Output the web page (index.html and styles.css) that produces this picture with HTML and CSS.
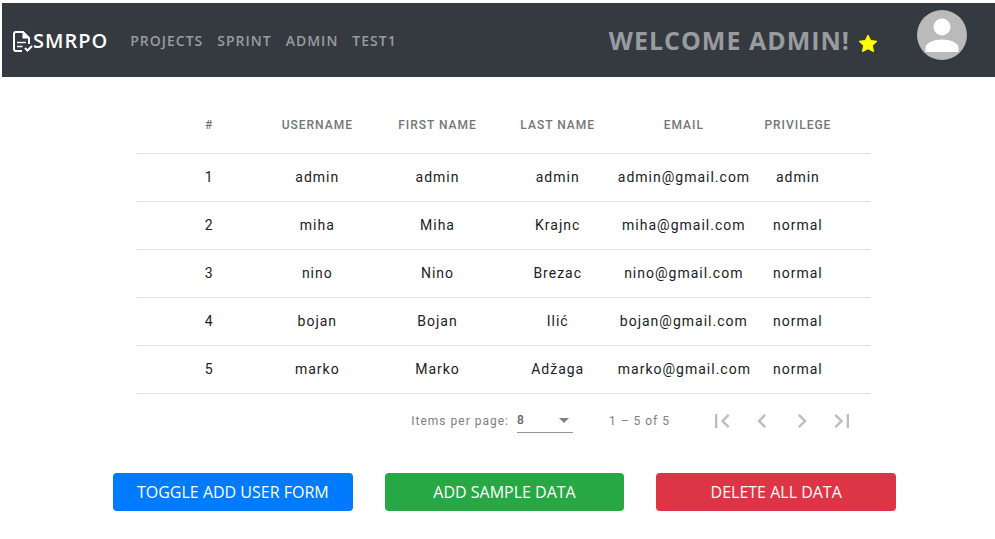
FILE: index.html
```html
<!DOCTYPE html>
<html lang="en">
<head>
<meta charset="utf-8">
<title>SMRPO</title>
<link rel="stylesheet" href="styles.css">
</head>
<body>
<header class="navbar">
  <a class="brand" href="#">
    <svg class="brand-icon" viewBox="0 0 20 22" fill="none" stroke="currentColor" stroke-width="2" aria-hidden="true">
      <path d="M9 20H3Q1 20 1 18V3Q1 1 3 1H10L16 7V13"/>
      <path d="M9.500 1V7.500H16.500Z" fill="currentColor" stroke="none"/>
      <path d="M4 11.500H13M4 15.500H9.500" stroke-width="1.500"/>
      <path d="M12 17L14.500 19.500L19 15"/>
    </svg><span>SMRPO</span>
  </a>
  <nav class="links">
    <a href="#">PROJECTS</a>
    <a href="#">SPRINT</a>
    <a href="#">ADMIN</a>
    <a href="#">TEST1</a>
  </nav>
  <div class="welcome">
    <span>WELCOME ADMIN!</span>
    <svg class="star" viewBox="0 0 20 19" aria-hidden="true"><path fill="#ff0" stroke="#ff0" stroke-linejoin="round" d="M10 1L12.700 6.500L19 7.300L14.400 11.500L15.600 17.700L10 14.700L4.400 17.700L5.600 11.500L1 7.300L7.300 6.500Z"/></svg>
  </div>
  <svg class="avatar" viewBox="0 0 50 50" role="img" aria-label="User profile">
    <circle cx="25" cy="25" r="25" fill="#bababa"/>
    <circle cx="25" cy="17" r="8.500" fill="#fff"/>
    <path fill="#fff" d="M8.500 42V38C8.500 32.500 17 29.500 25 29.500S41.500 32.500 41.500 38V42Z"/>
  </svg>
</header>
<main class="content">
  <section class="users">
    <table class="user-table">
      <thead>
        <tr><th class="index">#</th><th>USERNAME</th><th>FIRST NAME</th><th>LAST NAME</th><th class="email">EMAIL</th><th class="privilege">PRIVILEGE</th></tr>
      </thead>
      <tbody>
        <tr><td class="index">1</td><td>admin</td><td>admin</td><td>admin</td><td>admin@gmail.com</td><td class="privilege">admin</td></tr>
        <tr><td class="index">2</td><td>miha</td><td>Miha</td><td>Krajnc</td><td>miha@gmail.com</td><td class="privilege">normal</td></tr>
        <tr><td class="index">3</td><td>nino</td><td>Nino</td><td>Brezac</td><td>nino@gmail.com</td><td class="privilege">normal</td></tr>
        <tr><td class="index">4</td><td>bojan</td><td>Bojan</td><td>Ilić</td><td>bojan@gmail.com</td><td class="privilege">normal</td></tr>
        <tr><td class="index">5</td><td>marko</td><td>Marko</td><td>Adžaga</td><td>marko@gmail.com</td><td class="privilege">normal</td></tr>
      </tbody>
    </table>
    <div class="paginator">
      <label for="page-size">Items per page:</label>
      <div class="page-size">
        <select id="page-size"><option>8</option><option>16</option></select>
        <svg viewBox="0 0 10 5" aria-hidden="true"><path d="M0 0H10L5 5Z" fill="currentColor"/></svg>
      </div>
      <span class="range">1 – 5 of 5</span>
      <div class="pages">
        <button type="button" aria-label="First page"><svg viewBox="0 0 24 24"><path d="M18.410 16.590L13.820 12l4.590-4.590L17 6l-6 6 6 6zM6 6h2v12H6z"/></svg></button>
        <button type="button" aria-label="Previous page"><svg viewBox="0 0 24 24"><path d="M15.410 7.410L14 6l-6 6 6 6 1.410-1.410L10.830 12z"/></svg></button>
        <button type="button" aria-label="Next page"><svg viewBox="0 0 24 24"><path d="M10 6L8.590 7.410 13.170 12l-4.580 4.590L10 18l6-6z"/></svg></button>
        <button type="button" aria-label="Last page"><svg viewBox="0 0 24 24"><path d="M5.590 7.410L10.180 12l-4.590 4.590L7 18l6-6-6-6zM16 6h2v12h-2z"/></svg></button>
      </div>
    </div>
  </section>
  <div class="actions">
    <button type="button" class="toggle">TOGGLE ADD USER FORM</button>
    <button type="button" class="add">ADD SAMPLE DATA</button>
    <button type="button" class="delete">DELETE ALL DATA</button>
  </div>
</main>
</body>
</html>
```
FILE: styles.css
```css
* {
  box-sizing: border-box;
}

body {
  margin: 3px 0 0 2px;
  background: #fff;
  font-family: "Open Sans", "Noto Sans", sans-serif;
}

.navbar {
  display: flex;
  align-items: center;
  height: 74px;
  padding: 0 28px 0 11px;
  background: #343a40;
  color: #999c9f;
  letter-spacing: 1px;
}

.navbar a {
  color: inherit;
  text-decoration: none;
}

.navbar .brand {
  display: flex;
  align-items: center;
  color: #fff;
  font-size: 20px;
  font-weight: 600;
}

.brand-icon {
  width: 20px;
  height: 22px;
  margin-top: 4px;
}

.links {
  display: flex;
  gap: 14px;
  margin-left: 22px;
  font-size: 14px;
  font-weight: 600;
}

.welcome {
  display: flex;
  align-items: center;
  gap: 8px;
  margin-left: auto;
  font-size: 25px;
  font-weight: 700;
}

.star {
  width: 20px;
  height: 19px;
  margin-top: 6px;
}

.avatar {
  width: 50px;
  height: 50px;
  margin: 0 0 10px 39px;
}

.content {
  padding: 20px 99px 28px 111px;
}

.users {
  margin: 0 26px 0 24px;
  font-family: Roboto, sans-serif;
  letter-spacing: 1px;
}

.user-table {
  width: 100%;
  table-layout: fixed;
  border-collapse: collapse;
}

.user-table th,
.user-table td {
  height: 48px;
  padding: 0;
  border-bottom: 1px solid #e0e0e0;
  color: #212121;
  font-size: 14px;
  text-align: center;
  white-space: nowrap;
}

.user-table th {
  height: 56px;
  color: #757575;
  font-size: 12px;
  font-weight: 500;
}

.user-table .email {
  width: 18%;
}

.user-table .index {
  padding-left: 24px;
}

.user-table .privilege {
  padding-right: 24px;
}

.paginator {
  display: flex;
  align-items: center;
  justify-content: flex-end;
  height: 54px;
  padding-right: 8px;
  color: #808080;
  font-size: 12px;
}

.page-size {
  display: flex;
  align-items: center;
  width: 56px;
  height: 24px;
  margin-left: 8px;
  border-bottom: 1px solid #949494;
}

.page-size select {
  flex: 1;
  min-width: 0;
  padding: 0;
  border: 0;
  background: none;
  color: #616161;
  font: 500 12px Roboto, sans-serif;
  appearance: none;
}

.page-size svg {
  width: 10px;
  height: 5px;
  margin-right: 4px;
}

.range {
  margin: 0 32px 0 36px;
}

.pages {
  display: flex;
}

.pages button {
  display: flex;
  align-items: center;
  justify-content: center;
  width: 40px;
  height: 40px;
  padding: 0;
  border: 0;
  background: none;
}

.pages svg {
  width: 28px;
  height: 28px;
  fill: #bdbdbd;
}

.actions {
  display: flex;
  gap: 32px;
  margin-top: 25px;
}

.actions button {
  flex: 1;
  height: 38px;
  padding: 0;
  border: 0;
  border-radius: 4px;
  color: #fff;
  font: 16px "Open Sans", "Noto Sans", sans-serif;
}

.actions .toggle {
  background: #007bff;
}

.actions .add {
  background: #28a745;
}

.actions .delete {
  background: #dc3545;
}
```
